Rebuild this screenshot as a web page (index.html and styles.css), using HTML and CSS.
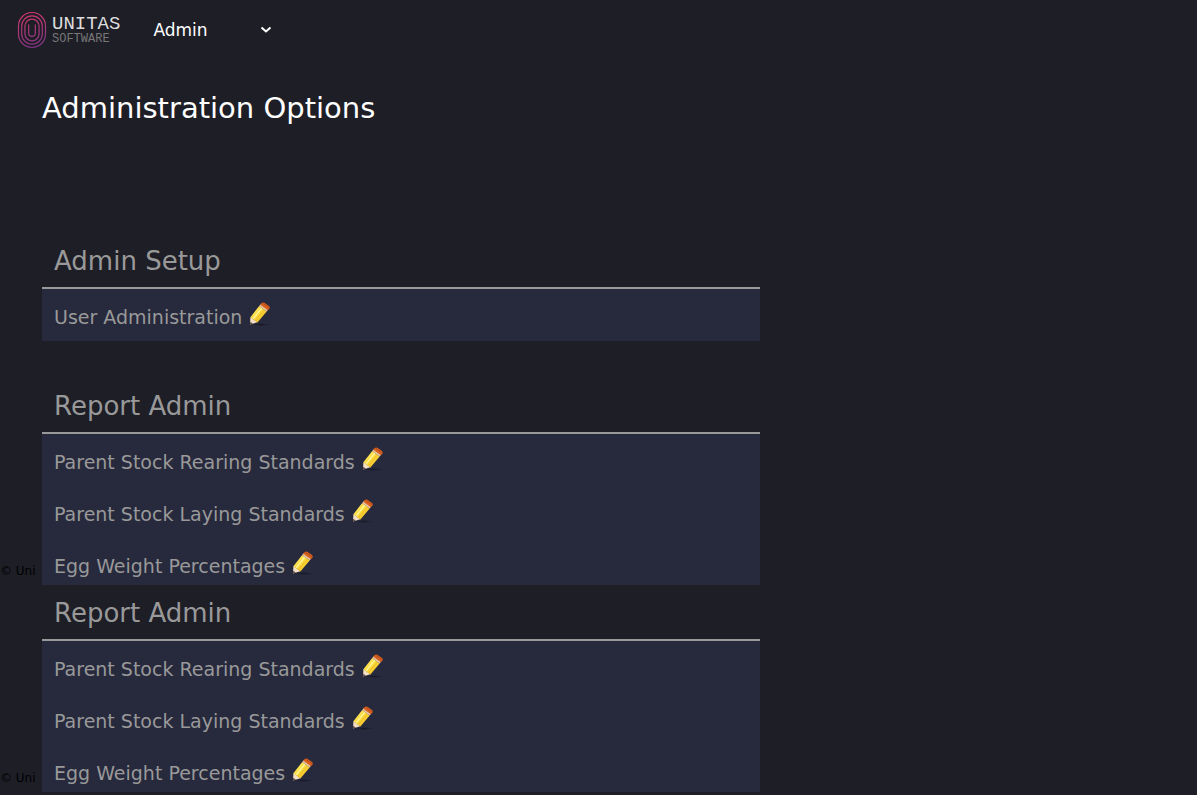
FILE: index.html
```html
<!DOCTYPE html>
<html lang="en">
<head>
<meta charset="utf-8">
<title>Administration Options</title>
<link rel="stylesheet" href="styles.css">
</head>
<body>
<svg class="defs" aria-hidden="true">
  <defs>
    <linearGradient id="wood" x1="0" y1="0" x2="1" y2="1">
      <stop offset="0" stop-color="#fff27a"/><stop offset=".5" stop-color="#fcd93a"/><stop offset="1" stop-color="#e9a91c"/>
    </linearGradient>
    <radialGradient id="shade"><stop offset="0" stop-color="#12131d" stop-opacity=".75"/><stop offset="1" stop-color="#12131d" stop-opacity="0"/></radialGradient>
    <symbol id="pencil" viewBox="0 0 24 24">
      <ellipse cx="13" cy="22.500" rx="10" ry="1.500" fill="url(#shade)"/>
      <path d="M2 22.500 2.400 15 9.400 20.200Z" fill="#f3dfc4"/>
      <path d="M2 22.500 2.200 19.800 4.800 21.600Z" fill="#5c4a44"/>
      <path d="M2.400 15.200 11.200 4 18.700 9.400 9.400 20.400Z" fill="url(#wood)"/>
      <path d="M5.200 16.800 13.800 6.200" stroke="#fff6a0" stroke-width="1.300" fill="none"/>
      <path d="M7.600 18.300 16.400 7.800" stroke="#e7b51e" stroke-width=".8" fill="none"/>
      <path d="M11.200 4 12.600 2.200 20.100 7.700 18.700 9.400Z" fill="#e9c7a5"/>
      <path d="M12.300 2.700 13.600 1.200Q14.800 0 16.300.7L21 3.900Q22.300 5 21.500 6.400L19.900 8.200Z" fill="#d9611e"/>
      <path d="M14.800 1.300 21 5.700" stroke="#b84a1a" stroke-width="1" fill="none"/>
    </symbol>
  </defs>
</svg>
<header class="topbar">
  <a class="brand" href="#" aria-label="Unitas Software">
    <svg class="brand-mark" viewBox="0 0 30 38" fill="none" stroke="url(#brandColor)" stroke-width="1.200">
      <defs><linearGradient id="brandColor" gradientUnits="userSpaceOnUse" x1="10" y1="0" x2="20" y2="38"><stop offset="0" stop-color="#d8386d"/><stop offset="1" stop-color="#7b3487"/></linearGradient></defs>
      <rect x="1.500" y="1.500" width="27" height="35" rx="13.500"/>
      <rect x="4.700" y="4.800" width="20.600" height="28.400" rx="10.300"/>
      <rect x="7.900" y="8.200" width="14.200" height="21.600" rx="7.100"/>
      <path d="M11.700 13.500v8.500q0 3.300 3.300 3.300t3.300-3.300v-8.500"/>
    </svg>
    <span class="brand-text"><span class="brand-name">UNITAS</span><span class="brand-sub">SOFTWARE</span></span>
  </a>
  <div class="menu">
    <select class="menu-select" aria-label="Section"><option>Admin</option></select>
    <svg class="menu-arrow" viewBox="0 0 12 8" fill="none" stroke="#fff" stroke-width="2"><path d="M1.500 1.500 6 5.500l4.500-4"/></svg>
  </div>
</header>
<main>
  <h1 class="title">Administration Options</h1>
  <section class="group group-spaced">
    <div class="panel">
      <h2 class="heading">Admin Setup</h2>
      <ul class="list">
        <li><a class="row" href="#">User Administration<svg class="pencil"><use href="#pencil"/></svg></a></li>
      </ul>
    </div>
  </section>
  <section class="group">
    <small class="note">© Uni</small>
    <div class="panel">
      <h2 class="heading">Report Admin</h2>
      <ul class="list list-short">
        <li><a class="row" href="#">Parent Stock Rearing Standards<svg class="pencil"><use href="#pencil"/></svg></a></li>
        <li><a class="row" href="#">Parent Stock Laying Standards<svg class="pencil"><use href="#pencil"/></svg></a></li>
        <li><a class="row" href="#">Egg Weight Percentages<svg class="pencil"><use href="#pencil"/></svg></a></li>
      </ul>
    </div>
  </section>
  <section class="group">
    <small class="note">© Uni</small>
    <div class="panel">
      <h2 class="heading">Report Admin</h2>
      <ul class="list list-short">
        <li><a class="row" href="#">Parent Stock Rearing Standards<svg class="pencil"><use href="#pencil"/></svg></a></li>
        <li><a class="row" href="#">Parent Stock Laying Standards<svg class="pencil"><use href="#pencil"/></svg></a></li>
        <li><a class="row" href="#">Egg Weight Percentages<svg class="pencil"><use href="#pencil"/></svg></a></li>
      </ul>
    </div>
  </section>
</main>
</body>
</html>
```
FILE: styles.css
```css
* { box-sizing: border-box; }
body {
  margin: 0;
  background: #1e1e27;
  color: #999;
  font-family: Verdana, "DejaVu Sans", sans-serif;
}
.defs { position: absolute; width: 0; height: 0; }
.topbar {
  display: flex;
  align-items: center;
  gap: 29px;
  height: 60px;
  padding: 0 17px;
}
.brand {
  display: flex;
  align-items: center;
  gap: 5px;
  color: #ddd;
  text-decoration: none;
}
.brand-mark { width: 30px; height: 38px; }
.brand-text {
  display: flex;
  flex-direction: column;
  font-family: "Liberation Mono", monospace;
}
.brand-name { font-size: 19px; line-height: 18px; }
.brand-sub { font-size: 12px; line-height: 12px; color: #777; }
.menu { display: flex; align-items: center; position: relative; }
.menu-select {
  appearance: none;
  width: 128px;
  height: 32px;
  padding: 0 24px 0 4px;
  border: 0;
  background: transparent;
  color: #fff;
  font: 17px "DejaVu Sans", sans-serif;
}
.menu-arrow {
  position: absolute;
  right: 5px;
  width: 12px;
  height: 8px;
  pointer-events: none;
}
.title {
  margin: 0;
  padding: 28px 42px 105px;
  color: #fff;
  font-size: 29px;
  font-weight: 400;
  line-height: 40px;
}
.group { display: grid; grid-template-columns: 42px 60%; }
.group-spaced { margin-bottom: 37px; }
.panel { grid-column: 2; }
.note {
  align-self: end;
  padding-bottom: 6px;
  color: #000;
  font-size: 12px;
  line-height: 16px;
}
.heading {
  margin: 0;
  padding: 10px 12px 8px;
  color: #999;
  font-size: 26px;
  font-weight: 400;
  line-height: 36px;
}
.list {
  margin: 0;
  padding: 0;
  border-top: 2px solid #999;
  background: #27293d;
  list-style: none;
}
.list-short li:last-child .row { height: 47px; }
.row {
  display: flex;
  align-items: flex-start;
  gap: 6px;
  height: 52px;
  padding: 13px 12px 0;
  color: #999;
  font-size: 19px;
  line-height: 30px;
  text-decoration: none;
}
.pencil { width: 24px; height: 24px; }
```
